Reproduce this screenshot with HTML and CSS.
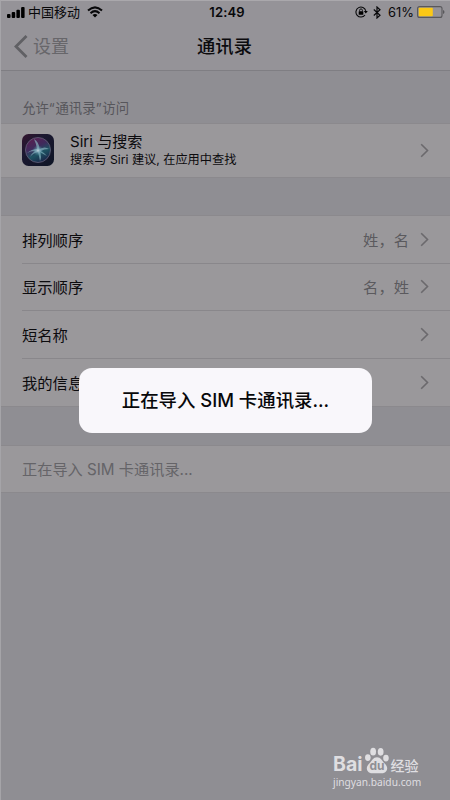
FILE: index.html
```html
<!DOCTYPE html>
<html lang="zh-CN">
<head>
<meta charset="utf-8">
<title>通讯录</title>
<link rel="stylesheet" href="styles.css">
</head>
<body>
<div class="screen">
  <header class="header">
    <div class="status">
      <div class="status-left">
        <svg class="signal" width="18" height="11" viewBox="0 0 18 11"><rect x="0" y="7" width="3.500" height="4" rx="1"/><rect x="4.700" y="5" width="3.500" height="6" rx="1"/><rect x="9.400" y="2.700" width="3.500" height="8.300" rx="1"/><rect x="14.100" y="0" width="3.500" height="11" rx="1"/></svg>
        <span class="carrier">中国移动</span>
        <svg class="wifi" width="16" height="12" viewBox="0 0 16 12"><path d="M1 4.600Q8-1.900 15 4.600M3.500 7.200Q8 3.100 12.500 7.200" fill="none" stroke="#08080a" stroke-width="2"/><path d="M5.500 9Q8 6.900 10.500 9L8 11.600Z"/></svg>
      </div>
      <span class="time">12:49</span>
      <div class="status-right">
        <svg width="13" height="12" viewBox="0 0 13 12"><path d="M10.800 4.800A5 5 0 1 0 10 9" fill="none" stroke="#08080a" stroke-width="1.100"/><path d="M8.800 5h4L10.800 7.400Z"/><rect x="3.700" y="5.200" width="4.600" height="3.500" rx=".5"/><path d="M4.600 5.400V4.300a1.400 1.400 0 0 1 2.800 0v1.100" fill="none" stroke="#08080a" stroke-width=".9"/></svg>
        <svg class="bluetooth" width="8" height="13" viewBox="0 0 8 13"><path d="M.8 3.500L7 9.300 4 12V1l3 2.700L.8 9.500" fill="none" stroke="#08080a" stroke-width="1.200"/></svg>
        <span class="percent">61%</span>
        <svg class="battery" width="28" height="12" viewBox="0 0 28 12"><rect x=".6" y=".6" width="24.400" height="10.800" rx="2" fill="none" stroke="#59585b" stroke-width="1.100"/><rect x="1.800" y="1.800" width="14" height="8.400" rx=".8" fill="#fbc816"/><path d="M26 4q1.500.3 1.500 2T26 8Z" fill="#59585b"/></svg>
      </div>
    </div>
    <nav class="nav">
      <div class="back"><svg width="14" height="23" viewBox="0 0 14 23"><path d="M12.500 1L2 11.500 12.500 22" fill="none" stroke="#606064" stroke-width="2.800"/></svg><span>设置</span></div>
      <h1 class="title">通讯录</h1>
    </nav>
  </header>
  <main>
    <h2 class="label">允许<span class="quote">“</span>通讯录<span class="quote">”</span>访问</h2>
    <section class="group siri">
      <svg class="siri-icon" width="32" height="32" viewBox="0 0 32 32">
        <defs>
          <linearGradient id="base" x1="0" y1="0" x2="1" y2="1"><stop stop-color="#35152f"/><stop offset=".35" stop-color="#1b1830"/><stop offset="1" stop-color="#0e1525"/></linearGradient>
          <linearGradient id="orb" x1=".2" y1="0" x2=".7" y2="1"><stop stop-color="#5b1d50"/><stop offset=".4" stop-color="#3e2b5c"/><stop offset=".65" stop-color="#1d5362"/><stop offset="1" stop-color="#1a2247"/></linearGradient>
          <radialGradient id="glow"><stop stop-color="#c5d8df"/><stop offset=".35" stop-color="#8ab7c6" stop-opacity=".6"/><stop offset="1" stop-color="#458fa0" stop-opacity="0"/></radialGradient>
        </defs>
        <rect width="32" height="32" rx="6.500" fill="url(#base)"/>
        <circle cx="16" cy="16" r="12.500" fill="url(#orb)" stroke="#65617a" stroke-width=".8"/>
        <path d="M5 19Q10 15 15 15Q14 9 12 5Q17 8 17.500 15Q23 12 27 15Q22 15 18.500 17Q23 19 25 22Q21 20 18 18Q20 23 18 27Q17 22 16 18Q11 19 8 23Q9 20 13 17Q8 17 5 19Z" fill="#8ebac4" opacity=".65"/>
        <circle cx="16" cy="16.500" r="5.500" fill="url(#glow)"/>
      </svg>
      <div class="siri-text"><div class="siri-title">Siri 与搜索</div><div class="siri-sub">搜索与 Siri 建议, 在应用中查找</div></div>
      <svg class="chevron" width="9" height="15" viewBox="0 0 9 15"><path d="M1.200 1.200l6.300 6.300-6.300 6.300"/></svg>
    </section>
    <section class="group options">
      <div class="row"><span>排列顺序</span><span class="value">姓，名</span><svg class="chevron" width="9" height="15" viewBox="0 0 9 15"><path d="M1.200 1.200l6.300 6.300-6.300 6.300"/></svg></div>
      <div class="row"><span>显示顺序</span><span class="value">名，姓</span><svg class="chevron" width="9" height="15" viewBox="0 0 9 15"><path d="M1.200 1.200l6.300 6.300-6.300 6.300"/></svg></div>
      <div class="row"><span>短名称</span><svg class="chevron" width="9" height="15" viewBox="0 0 9 15"><path d="M1.200 1.200l6.300 6.300-6.300 6.300"/></svg></div>
      <div class="row"><span>我的信息</span><svg class="chevron" width="9" height="15" viewBox="0 0 9 15"><path d="M1.200 1.200l6.300 6.300-6.300 6.300"/></svg></div>
    </section>
    <section class="group import">正在导入 SIM 卡通讯录...</section>
  </main>
  <div class="dialog" role="dialog">正在导入 SIM 卡通讯录...</div>
  <div class="watermark">
    <div class="brand"><span class="bai">Bai</span><span class="paw"><svg width="26" height="27" viewBox="0 0 26 28"><ellipse cx="3.500" cy="11" rx="2.900" ry="3.500"/><ellipse cx="9" cy="4.800" rx="3" ry="4"/><ellipse cx="16.800" cy="5" rx="3" ry="4"/><ellipse cx="22.300" cy="11.500" rx="2.900" ry="3.500"/><path d="M13 10.500c4 0 5 3.500 8 6.500 5 4.500 2 10.500-3 10.300-3.500-.2-6.500-.2-10 0-5 .2-8-5.800-3-10.300C8 14 9 10.500 13 10.500Z"/></svg><span class="du">du</span></span><span class="jingyan">经验</span></div>
    <div class="url">jingyan.baidu.com</div>
  </div>
</div>
</body>
</html>
```
FILE: styles.css
```css
* { box-sizing: border-box; }
body {
  margin: 0;
  font-family: Inter, "Noto Sans CJK SC", sans-serif;
  color: #0c0b0e;
}
svg { display: block; flex: none; }
.screen {
  position: relative;
  width: 450px;
  height: 800px;
  overflow: hidden;
  background: #8f8e93;
  border-top: 1px solid #aaa8ac;
  border-left: 1px solid #a5a4a8;
}
.header {
  height: 70px;
  background: #959398;
  border-bottom: 1px solid #7f7e83;
}
.status {
  display: grid;
  grid-template-columns: 1fr auto 1fr;
  align-items: center;
  height: 22px;
  padding: 0 4px 0 6px;
  color: #08080a;
}
.status-left, .status-right { display: flex; align-items: center; }
.status-right { justify-content: flex-end; padding-right: 1px; }
.carrier { margin-left: 3px; font-size: 13px; line-height: 20px; }
.wifi { margin-left: 7px; }
.time { padding-left: 1px; font-size: 13px; font-weight: 600; letter-spacing: .15px; }
.bluetooth { margin-left: 5px; }
.percent { margin: 0 3px 0 7px; font-size: 12.9px; }
.nav {
  display: grid;
  grid-template-columns: 1fr auto 1fr;
  align-items: center;
  height: 46px;
  padding: 0 4px 0 13px;
}
.back {
  display: flex;
  align-items: center;
  gap: 5px;
  color: #67666a;
  font-size: 18px;
}
.back span { padding-top: 1px; line-height: 27px; }
.title { margin: 0 11px 0 0; font-size: 18.3px; font-weight: 500; line-height: 26px; }
.label {
  margin: 27px 0 5px 21px;
  color: #57565b;
  font-size: 13.4px;
  font-weight: 400;
  line-height: 20px;
}
.quote { display: inline-block; width: 6.7px; }
.group {
  background: #9a989b;
  border-top: 1px solid #8b898d;
  border-bottom: 1px solid #8b898d;
}
.siri {
  display: flex;
  align-items: center;
  height: 55px;
  padding: 0 21px;
}
.siri-icon { margin-top: -1px; }
.siri-text { margin: -1px 0 0 16px; }
.siri-title { font-size: 15.1px; line-height: 19px; }
.siri-sub { font-size: 12.2px; line-height: 18px; }
.chevron { margin-left: auto; fill: none; stroke: #6b696d; stroke-width: 1.6; }
.siri .chevron { margin-top: -1px; }
.options { height: 192px; margin-top: 37px; padding-left: 21px; }
.row {
  display: flex;
  align-items: center;
  height: 47.67px;
  padding-right: 21px;
  border-bottom: 1px solid #89878b;
  font-size: 15.3px;
}
.row span { margin-top: -1px; }
.row:last-child { border-bottom: 0; }
.row .value { margin-left: auto; color: #5b5a5e; }
.value + .chevron { margin-left: 11px; }
.import {
  height: 48px;
  margin-top: 38px;
  padding-left: 21px;
  color: #656468;
  font-size: 15.2px;
  line-height: 47px;
}
.dialog {
  position: absolute;
  left: 78px;
  top: 367px;
  width: 293px;
  height: 65px;
  border-radius: 13px;
  background: #f9f7fb;
  color: #08080a;
  font-size: 18.4px;
  font-weight: 500;
  line-height: 64px;
  text-align: center;
}
.watermark {
  position: absolute;
  left: 332px;
  top: 746px;
  width: 91px;
  color: #dfdee1;
}
.brand { display: flex; align-items: flex-end; height: 27px; }
.bai { height: 18px; font: 700 19.5px/16px Inter, sans-serif; }
.paw { position: relative; margin-left: 1px; fill: #dfdee1; }
.du {
  position: absolute;
  left: 6px;
  top: 13px;
  color: #8f8e93;
  font: 700 12px/12px Inter, sans-serif;
}
.jingyan { margin-left: 1px; font-size: 14px; font-weight: 500; line-height: 16px; }
.url { margin-top: 1px; font: 400 10.2px/14px "Noto Sans", sans-serif; }
```
